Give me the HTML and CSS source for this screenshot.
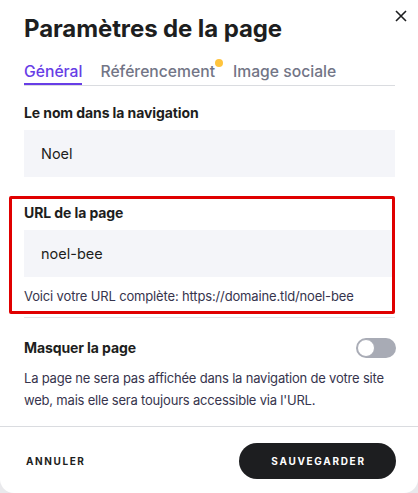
FILE: index.html
```html
<!DOCTYPE html>
<html lang="fr">
<head>
<meta charset="utf-8">
<link rel="stylesheet" href="styles.css">
</head>
<body>
<div class="modal">
  <button class="close" aria-label="Fermer">
    <svg width="12" height="12" viewBox="0 0 12 12"><path d="M1 1L11 11M11 1L1 11" stroke="#1d1e20" stroke-width="1.6" fill="none"/></svg>
  </button>
  <h1 class="title">Paramètres de la page</h1>
  <nav class="tabs">
    <span class="tab active">Général</span>
    <span class="tab dot">Référencement</span>
    <span class="tab">Image sociale</span>
  </nav>
  <div class="body">
    <div class="field">
      <label class="label">Le nom dans la navigation</label>
      <div class="input">Noel</div>
    </div>
    <div class="field highlight">
      <label class="label">URL de la page</label>
      <div class="input">noel-bee</div>
      <p class="hint">Voici votre URL complète: https://domaine.tld/noel-bee</p>
    </div>
    <div class="divider"></div>
    <div class="toggle-row">
      <span class="label">Masquer la page</span>
      <span class="switch"><span class="knob"></span></span>
    </div>
    <p class="desc">La page ne sera pas affichée dans la navigation de votre site web, mais elle sera toujours accessible via l'URL.</p>
  </div>
  <footer class="footer">
    <button class="btn-text">ANNULER</button>
    <button class="btn-primary">SAUVEGARDER</button>
  </footer>
</div>
</body>
</html>
```
FILE: styles.css
```css
html, body {
  margin: 0;
  padding: 0;
  background: #e9e9ec;
}
body {
  font-family: "Inter", "DejaVu Sans", sans-serif;
  color: #1d1e20;
  width: 418px;
  height: 493px;
  overflow: hidden;
}
.modal {
  position: relative;
  background: #fff;
  width: 418px;
  height: 493px;
  border-radius: 0 0 14px 14px;
  box-sizing: border-box;
}
.close {
  position: absolute;
  top: 8px;
  right: 9px;
  width: 16px;
  height: 16px;
  padding: 0;
  border: 0;
  background: none;
  display: flex;
  align-items: center;
  justify-content: center;
}
.title {
  margin: 0;
  padding: 14px 0 0 24px;
  font-size: 24px;
  line-height: 30px;
  font-weight: 700;
  letter-spacing: -0.1px;
}
.tabs {
  margin: 18px 23px 0 24px;
  display: flex;
  gap: 18px;
  border-bottom: 1px solid #dadce0;
  height: 24px;
  box-sizing: border-box;
}
.tab {
  font-size: 15.7px;
  font-weight: 500;
  color: #727586;
  line-height: 20px;
  position: relative;
  height: 23px;
  box-sizing: border-box;
}
.tab.active {
  color: #673de6;
  border-bottom: 2px solid #673de6;
}
.tab.dot::after {
  content: "";
  position: absolute;
  top: -3px;
  right: -8px;
  width: 8px;
  height: 8px;
  border-radius: 50%;
  background: #ffc43d;
}
.field {
  padding: 18px 23px 0 24px;
}
.label {
  display: block;
  font-size: 14px;
  font-weight: 700;
  line-height: 18px;
  letter-spacing: -0.1px;
  color: #1d1e20;
}
.input {
  margin-top: 8px;
  height: 47px;
  background: #f4f5f9;
  padding: 0 17px;
  display: flex;
  align-items: center;
  font-size: 14.5px;
  color: #1d1e20;
}
.field.highlight {
  margin: 19px 23px 0 9px;
  padding: 5px 0 0 12px;
  border: 3px solid #e00000;
  border-radius: 2px;
  height: 118px;
  box-sizing: border-box;
}
.hint {
  margin: 11px 0 0;
  font-size: 13px;
  line-height: 16px;
  letter-spacing: -0.15px;
  color: #36344d;
}
.divider {
  margin: 3px 23px 0 24px;
  height: 1px;
  background: #e3e4e8;
}
.toggle-row {
  margin: 18px 22px 0 24px;
  display: flex;
  justify-content: space-between;
  align-items: center;
  height: 24px;
}
.switch {
  width: 40px;
  height: 20px;
  border-radius: 10px;
  background: #a8abb5;
  position: relative;
  display: block;
}
.knob {
  position: absolute;
  top: 1px;
  left: 1px;
  width: 16px;
  height: 16px;
  border-radius: 50%;
  background: #fff;
  border: 1px solid #a8abb5;
}
.desc {
  margin: 7px 20px 0 24px;
  font-size: 13px;
  line-height: 22px;
  letter-spacing: -0.2px;
  color: #36344d;
}
.footer {
  position: absolute;
  left: 0;
  right: 0;
  top: 426px;
  border-top: 1px solid #dadce0;
  display: flex;
  justify-content: space-between;
  align-items: center;
  padding: 16px 22px 0 26px;
}
.btn-text {
  border: 0;
  background: none;
  padding: 0;
  font-family: inherit;
  font-size: 10px;
  font-weight: 700;
  letter-spacing: 1.6px;
  color: #1d1e20;
}
.btn-primary {
  border: 0;
  background: #1d1e20;
  color: #fff;
  font-family: inherit;
  font-size: 10px;
  font-weight: 700;
  letter-spacing: 1.7px;
  width: 157px;
  height: 36px;
  border-radius: 18px;
  padding: 0 0 0 2px;
}
```
